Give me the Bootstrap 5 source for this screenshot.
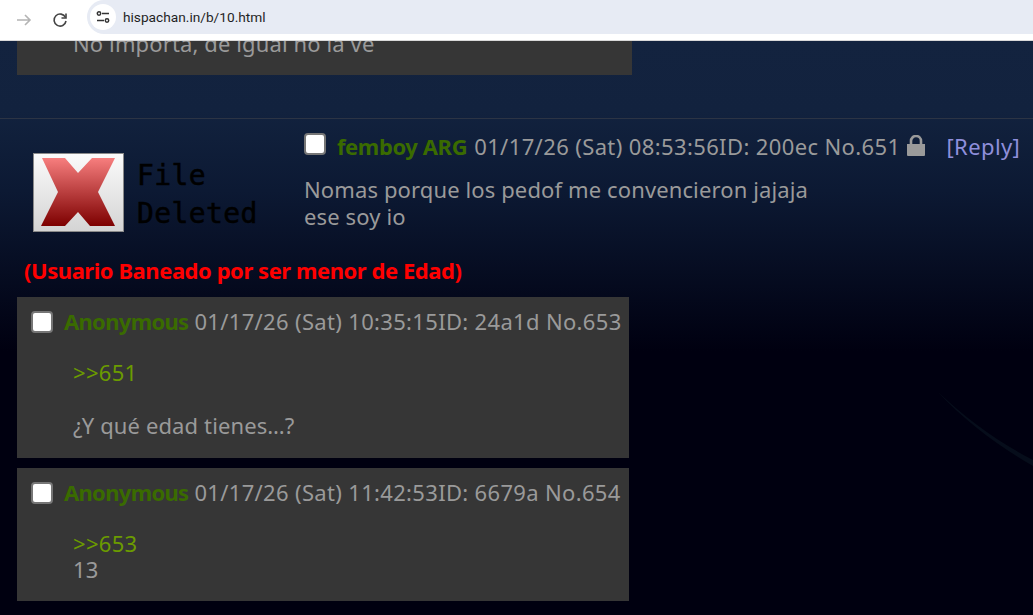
<!DOCTYPE html>
<html lang="en">
<head>
  <meta charset="UTF-8">
  <title>hispachan.in/b/10.html</title>
  <link href="https://cdn.jsdelivr.net/npm/bootstrap@5.3.3/dist/css/bootstrap.min.css" rel="stylesheet">
  <style>
    html, body {
      height: 615px;
      overflow: hidden;
    }
    body {
      background: #000010;
      font-family: "Noto Sans", "Open Sans", sans-serif;
      font-size: 22px;
      letter-spacing: .12px;
      color: #9a9a9a;
    }
    .chrome-bar {
      height: 41px;
      background: #fff;
      border-bottom: 1px solid #d9d9d9;
      padding-left: 16px;
    }
    .chrome-reload {
      margin-left: 20px;
    }
    .chrome-url {
      height: 34px;
      width: 946px;
      margin-left: 19px;
      margin-top: -7px;
      padding-left: 3px;
      background: #e7ebf4;
      border-radius: 17px 0 0 17px;
      font: 13.7px "Roboto", sans-serif;
      letter-spacing: 0;
      color: #1f1f1f;
    }
    .chrome-tune {
      width: 26px;
      height: 26px;
      margin-right: 7px;
      background: #fff;
      border-radius: 50%;
    }
    .board-page {
      height: 574px;
      background: linear-gradient(#13233f 0, #12223e 70px, #0c1933 150px, #000010 310px);
      position: relative;
    }
    .clipped-post {
      width: 615px;
      height: 34px;
      margin-left: 17px;
      background: #363636;
      overflow: hidden;
    }
    .clipped-post p {
      margin: -12px 0 0 56px;
      line-height: 28px;
    }
    .thread-rule {
      margin-top: 43px;
      border-top: 1px solid #2c3444;
      padding-top: 14px;
    }
    .op-head {
      height: 123px;
    }
    .deleted-thumb {
      width: 304px;
      padding: 20px 0 0 33px;
      flex-shrink: 0;
    }
    .deleted-label {
      font: 28px/38px "DejaVu Sans Mono", monospace;
      letter-spacing: .4px;
      -webkit-text-stroke: .5px #000;
      color: #000;
      margin-left: 13px;
      margin-top: 4px;
    }
    .post-line {
      white-space: nowrap;
      height: 28px;
    }
    .post-check {
      appearance: none;
      width: 22px;
      height: 22px;
      background: #fff;
      border: 2px solid #767676;
      border-radius: 4px;
      margin-right: 11px;
      flex-shrink: 0;
    }
    .poster, .post-stamp, .reply-link {
      line-height: 26px;
      padding-bottom: 2px;
    }
    .poster {
      color: #3a6b00;
      font-weight: 700;
      letter-spacing: -.7px;
      margin-right: 6px;
    }
    .post-stamp {
      letter-spacing: .33px;
    }
    .op-head .poster {
      letter-spacing: -.4px;
      margin-right: 7px;
    }
    .op-head .post-stamp {
      letter-spacing: .38px;
    }
    .lock-icon {
      margin: 2px 0 0 6px;
    }
    .reply-link {
      color: #8f8fdc;
      text-decoration: none;
      letter-spacing: .4px;
      margin-left: 20px;
    }
    .op-body {
      margin-top: 15px;
      line-height: 27px;
    }
    .ban-note {
      color: #f00;
      font-weight: 700;
      line-height: 28px;
      margin: 0 0 13px 24px;
      letter-spacing: -.45px;
    }
    .reply-post {
      width: 612px;
      margin: 0 0 10px 17px;
      background: #363636;
      padding: 11px 14px 0;
    }
    .reply-tall {
      height: 161px;
    }
    .reply-short {
      height: 133px;
    }
    .reply-body {
      margin-top: 23px;
      padding-left: 42px;
      line-height: 26.5px;
    }
    .reply-short .reply-body {
      line-height: 26px;
    }
    .green-quote {
      color: #6b9b00;
      letter-spacing: .3px;
    }
    .streak {
      position: absolute;
      right: 0;
      top: 351px;
    }
  </style>
</head>
<body>
  <div class="chrome-bar d-flex align-items-center">
    <svg width="16" height="16" viewBox="0 0 16 16" fill="none" stroke="#b4b4b4" stroke-width="1.6"><path d="M1 8h13M9 3l5 5-5 5"/></svg>
    <svg class="chrome-reload" width="16" height="16" viewBox="0 0 16 16" fill="none" stroke="#444" stroke-width="1.6"><path d="M13.500 5.500A6 6 0 1 0 14 9"/><path d="M14 1.500v4.500h-4.500"/></svg>
    <div class="chrome-url d-flex align-items-center">
      <span class="chrome-tune d-flex align-items-center justify-content-center">
        <svg width="14" height="14" viewBox="0 0 14 14" fill="none" stroke="#333" stroke-width="1.5"><circle cx="3" cy="3.500" r="1.700"/><path d="M6 3.500h7M1 10.500h7"/><circle cx="11" cy="10.500" r="1.700"/></svg>
      </span>
      hispachan.in/b/10.html
    </div>
  </div>

  <div class="board-page">
    <div class="clipped-post"><p>No importa, de igual no la ve</p></div>

    <div class="thread-rule">
      <div class="op-head d-flex">
        <div class="deleted-thumb d-flex">
          <svg width="91" height="79" viewBox="0 0 91 79">
            <defs>
              <linearGradient id="tile" x1="0" y1="0" x2="0" y2="1"><stop offset="0" stop-color="#fbfbfb"/><stop offset="1" stop-color="#d4d4d4"/></linearGradient>
              <linearGradient id="cross" x1="0" y1="0" x2="0" y2="1"><stop offset="0" stop-color="#f77e7e"/><stop offset="1" stop-color="#7d0000"/></linearGradient>
            </defs>
            <rect x=".5" y=".5" width="90" height="78" fill="url(#tile)" stroke="#8a8a8a"/>
            <path d="M9 5h23l13 15L59 5h23L65 39l17 34H57L45 59 32 73H8l17-34z" fill="url(#cross)"/>
          </svg>
          <div class="deleted-label">File<br>Deleted</div>
        </div>
        <div>
          <div class="post-line d-flex align-items-start">
            <input class="post-check" type="checkbox">
            <span class="poster">femboy ARG</span>
            <span class="post-stamp">01/17/26 (Sat) 08:53:56ID: 200ec No.651</span>
            <svg class="lock-icon" width="20" height="21" viewBox="0 0 20 21" fill="#9a9a9a"><path d="M1 9h18v11a1 1 0 0 1-1 1H2a1 1 0 0 1-1-1z"/><path d="M5 10V6a5 5 0 0 1 10 0v4" fill="none" stroke="#9a9a9a" stroke-width="2.600"/></svg>
            <a class="reply-link" href="#">[Reply]</a>
          </div>
          <div class="op-body">Nomas porque los pedof me convencieron jajaja<br>ese soy io</div>
        </div>
      </div>
      <div class="ban-note">(Usuario Baneado por ser menor de Edad)</div>

      <div class="reply-post reply-tall">
        <div class="post-line d-flex align-items-center">
          <input class="post-check" type="checkbox">
          <span class="poster">Anonymous</span>
          <span class="post-stamp">01/17/26 (Sat) 10:35:15ID: 24a1d No.653</span>
        </div>
        <div class="reply-body"><span class="green-quote">&gt;&gt;651</span><br><br>¿Y qué edad tienes…?</div>
      </div>

      <div class="reply-post reply-short">
        <div class="post-line d-flex align-items-center">
          <input class="post-check" type="checkbox">
          <span class="poster">Anonymous</span>
          <span class="post-stamp">01/17/26 (Sat) 11:42:53ID: 6679a No.654</span>
        </div>
        <div class="reply-body"><span class="green-quote">&gt;&gt;653</span><br>13</div>
      </div>
    </div>

    <svg class="streak" width="95" height="76" viewBox="0 0 95 76"><path d="M0 0C30 28 60 50 95 68V74C60 54 28 30 0 0z" fill="#060d1b"/></svg>
  </div>

  <script src="https://cdn.jsdelivr.net/npm/bootstrap@5.3.3/dist/js/bootstrap.bundle.min.js"></script>
</body>
</html>
